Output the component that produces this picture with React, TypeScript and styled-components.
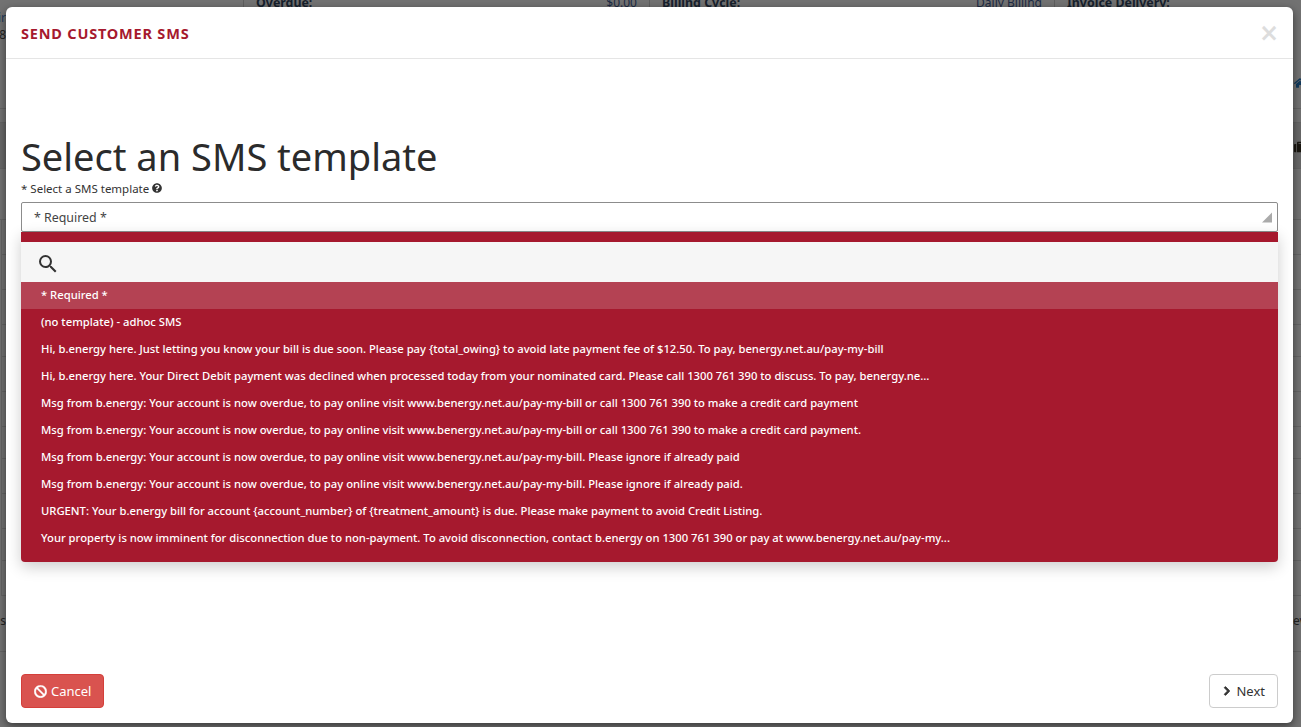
import styled, { createGlobalStyle } from 'styled-components'
import { FaBan, FaChevronRight, FaHome, FaQuestionCircle, FaSuitcase } from 'react-icons/fa'
import { MdSearch } from 'react-icons/md'

const templates = [
    '(no template) - adhoc SMS',
    'Hi, b.energy here. Just letting you know your bill is due soon. Please pay {total_owing} to avoid late payment fee of $12.50. To pay, benergy.net.au/pay-my-bill',
    'Hi, b.energy here. Your Direct Debit payment was declined when processed today from your nominated card. Please call 1300 761 390 to discuss. To pay, benergy.ne...',
    'Msg from b.energy: Your account is now overdue, to pay online visit www.benergy.net.au/pay-my-bill or call 1300 761 390 to make a credit card payment',
    'Msg from b.energy: Your account is now overdue, to pay online visit www.benergy.net.au/pay-my-bill or call 1300 761 390 to make a credit card payment.',
    'Msg from b.energy: Your account is now overdue, to pay online visit www.benergy.net.au/pay-my-bill. Please ignore if already paid',
    'Msg from b.energy: Your account is now overdue, to pay online visit www.benergy.net.au/pay-my-bill. Please ignore if already paid.',
    'URGENT: Your b.energy bill for account {account_number} of {treatment_amount} is due. Please make payment to avoid Credit Listing.',
    'Your property is now imminent for disconnection due to non-payment. To avoid disconnection, contact b.energy on 1300 761 390 or pay at www.benergy.net.au/pay-my...',
]

// row lines of the page behind the dialog
const backRows = [
    { h: 102 },
    { h: 14 },
    { h: 46, dark: true },
    { h: 51 },
    ...[35, 35, 35, 32, 35, 35, 32, 35, 35, 32, 35].map((h) => ({ h, boxed: true })),
    { h: 56 },
]

const App = () => {
    return (
        <Page>
            <GlobalStyle />
            <Behind>
                <TopStrip>
                    <Cell $width={406}><b>Overdue:</b><span>$0.00</span></Cell>
                    <Cell $width={405}><b>Billing Cycle:</b><span>Daily Billing</span></Cell>
                    <Cell $width={200}><b>Invoice Delivery:</b></Cell>
                </TopStrip>
                <Rows>
                    {backRows.map((r, i) => (
                        <BackRow key={i} $dark={r.dark} $boxed={r.boxed} style={{ height: r.h }} />
                    ))}
                </Rows>
            </Behind>
            <EdgeText $top={9} $side="left" $blue>ir</EdgeText>
            <EdgeText $top={26} $side="left">8</EdgeText>
            <EdgeText $top={612} $side="left">as</EdgeText>
            <EdgeText $top={612} $side="right">ev</EdgeText>
            <EdgeIcon $top={76} $color="#123a5c"><FaHome /></EdgeIcon>
            <EdgeIcon $top={140} $color="#1a1710"><FaSuitcase /></EdgeIcon>

            <Modal>
                <Header>
                    <Title>SEND CUSTOMER SMS</Title>
                    <Close>×</Close>
                </Header>
                <Body>
                    <Heading>Select an SMS template</Heading>
                    <FieldLabel>* Select a SMS template <FaQuestionCircle size={10} /></FieldLabel>
                    <SelectBox>
                        <span>* Required *</span>
                        <Arrow viewBox="0 0 10 10"><path d="M10 0V10H0Z" /></Arrow>
                    </SelectBox>
                    <Dropdown>
                        <SearchRow><MdSearch size={24} /></SearchRow>
                        <Option $active>* Required *</Option>
                        {templates.map((t) => <Option key={t}>{t}</Option>)}
                    </Dropdown>
                </Body>
                <Footer>
                    <CancelButton><FaBan size={13} /> Cancel</CancelButton>
                    <NextButton><FaChevronRight size={10} /> Next</NextButton>
                </Footer>
            </Modal>
        </Page>
    )
}

export default App

const font = `"Noto Sans", sans-serif`

const GlobalStyle = createGlobalStyle`
html, body {
    margin: 0;
    padding: 0;
    height: 100%;
    overflow: hidden;
}
* {
    box-sizing: border-box;
}
`

const Page = styled.div`
position: relative;
width: 1301px;
height: 727px;
overflow: hidden;
background-color: #727272;
font-family: ${font};
`

const Behind = styled.div`
width: 100%;
color: #111;
`

const TopStrip = styled.div`
display: flex;
height: 7px;
padding-left: 243px;
overflow: hidden;
font-size: 12px;
line-height: 8px;
`

const Cell = styled.div<{ $width: number }>`
width: ${(p) => p.$width}px;
height: 7px;
flex: none;
display: flex;
justify-content: space-between;
padding: 0 12px;
border-left: 1px solid #5e5e5e;
align-items: flex-end;
color: #16202c;

b {
    font-size: 12.4px;
}
span {
    color: #1c2a44;
}
`

const Rows = styled.div`
display: flex;
flex-direction: column;
`

const BackRow = styled.div<{ $dark?: boolean; $boxed?: boolean }>`
border-bottom: 1px solid #646464;
background-color: ${(p) => (p.$dark ? '#686868' : 'transparent')};
${(p) => p.$boxed && `
margin-left: 1px;
border-left: 1px solid #646464;
`}
`

const EdgeText = styled.span<{ $top: number; $side: 'left' | 'right'; $blue?: boolean }>`
position: absolute;
top: ${(p) => p.$top}px;
${(p) => (p.$side === 'left' ? 'right: 1295px;' : 'left: 1293px;')}
font-size: 12px;
color: ${(p) => (p.$blue ? '#1f3a5a' : '#222')};
`

const EdgeIcon = styled.span<{ $top: number; $color: string }>`
position: absolute;
top: ${(p) => p.$top}px;
left: 1294px;
font-size: 12px;
color: ${(p) => p.$color};
`

const Modal = styled.div`
position: absolute;
top: 7px;
left: 6px;
width: 1287px;
height: 716px;
display: flex;
flex-direction: column;
background-color: #fff;
border-radius: 6px;
box-shadow: 0 3px 9px rgba(0, 0, 0, 0.5);
`

const Header = styled.div`
height: 52px;
flex: none;
display: flex;
align-items: center;
justify-content: space-between;
padding: 0 14px 0 15px;
border-bottom: 1px solid #e5e5e5;
`

const Title = styled.div`
font-size: 14.5px;
font-weight: 700;
letter-spacing: 0.8px;
color: #a6192e;
`

const Close = styled.div`
font-family: "DejaVu Sans", sans-serif;
font-size: 24px;
font-weight: 700;
color: #ddd;
line-height: 1;
`

const Body = styled.div`
flex: 1;
padding: 71px 15px 0;
`

const Heading = styled.h1`
margin: 0;
font-size: 38px;
font-weight: 400;
line-height: 52px;
color: #2b2b2b;
`

const FieldLabel = styled.div`
display: flex;
align-items: center;
gap: 3px;
height: 20px;
padding-bottom: 8px;
font-size: 11.5px;
color: #333;
`

const SelectBox = styled.div`
height: 30px;
display: flex;
align-items: center;
justify-content: space-between;
padding: 0 5px 0 12px;
background-color: #fff;
border: 1px solid #8c8c8c;
border-radius: 2px;
font-size: 12.4px;
color: #444;
`

const Arrow = styled.svg`
width: 10px;
height: 11px;
fill: #aaa;
`

const Dropdown = styled.div`
padding: 10px 0;
background-color: #a6192e;
border-radius: 0 0 4px 4px;
box-shadow: 0 5px 15px rgba(0, 0, 0, 0.2);
`

const SearchRow = styled.div`
height: 40px;
display: flex;
align-items: center;
padding: 4px 0 0 15px;
background-color: #f6f6f6;
color: #333;
`

const Option = styled.div<{ $active?: boolean }>`
height: 27px;
line-height: 26px;
padding-left: 20px;
font-size: 11.25px;
font-weight: 500;
white-space: nowrap;
color: #fff;
background-color: ${(p) => (p.$active ? '#b44253' : 'transparent')};
`

const Footer = styled.div`
display: flex;
justify-content: space-between;
padding: 0 15px 15px;
`

const BaseButton = styled.button`
height: 34px;
display: flex;
align-items: center;
gap: 4px;
padding: 0 12px;
border-radius: 4px;
font-family: ${font};
font-size: 13px;
`

const CancelButton = styled(BaseButton)`
color: #fff;
background-color: #d9534f;
border: 1px solid #d43f3a;

svg {
    stroke: currentColor;
    stroke-width: 15;
}
`

const NextButton = styled(BaseButton)`
color: #333;
background-color: #fff;
border: 1px solid #ccc;

svg {
    stroke: currentColor;
    stroke-width: 50;
}
`
